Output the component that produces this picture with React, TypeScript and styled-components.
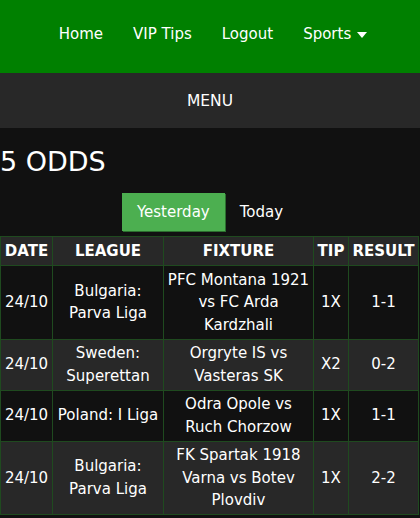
import * as React from "react";
import styled, { createGlobalStyle } from "styled-components";

const GlobalStyle = createGlobalStyle`
  html, body {
    margin: 0;
    padding: 0;
    background-color: #111111;
    color: white;
    font-family: "DejaVu Sans", Verdana, sans-serif;
    font-size: 15px;
  }
`;

const tips = [
  { date: "24/10", league: "Bulgaria: Parva Liga", fixture: "PFC Montana 1921 vs FC Arda Kardzhali", tip: "1X", result: "1-1" },
  { date: "24/10", league: "Sweden: Superettan", fixture: "Orgryte IS vs Vasteras SK", tip: "X2", result: "0-2" },
  { date: "24/10", league: "Poland: I Liga", fixture: "Odra Opole vs Ruch Chorzow", tip: "1X", result: "1-1" },
  { date: "24/10", league: "Bulgaria: Parva Liga", fixture: "FK Spartak 1918 Varna vs Botev Plovdiv", tip: "1X", result: "2-2" },
];

function App() {
  const [day, setDay] = React.useState("yesterday");

  return (
    <>
      <GlobalStyle />
      <Nav>
        <NavLink href="#">Home</NavLink>
        <NavLink href="#">VIP Tips</NavLink>
        <NavLink href="#">Logout</NavLink>
        <NavLink href="#">
          Sports
          <Caret />
        </NavLink>
      </Nav>
      <MenuBar>MENU</MenuBar>
      <Title>5 ODDS</Title>
      <Tabs>
        <Tab active={day === "yesterday"} onClick={() => setDay("yesterday")}>
          Yesterday
        </Tab>
        <Tab active={day === "today"} onClick={() => setDay("today")}>
          Today
        </Tab>
      </Tabs>
      <Table>
        <colgroup>
          <col style={{ width: 52 }} />
          <col style={{ width: 111 }} />
          <col style={{ width: 150 }} />
          <col style={{ width: 35 }} />
          <col />
        </colgroup>
        <thead>
          <tr>
            <Th>DATE</Th>
            <Th>LEAGUE</Th>
            <Th>FIXTURE</Th>
            <Th>TIP</Th>
            <Th>RESULT</Th>
          </tr>
        </thead>
        <tbody>
          {tips.map((t, i) => (
            <Row key={i} striped={i % 2 === 1}>
              <Td>{t.date}</Td>
              <Td>{t.league}</Td>
              <Td>{t.fixture}</Td>
              <Td>{t.tip}</Td>
              <Td>{t.result}</Td>
            </Row>
          ))}
        </tbody>
      </Table>
    </>
  );
}

const Nav = styled.nav`
  background-color: #008000;
  height: 73px;
  display: flex;
  justify-content: center;
  align-items: flex-start;
  padding-top: 24px;
  box-sizing: border-box;
  padding-left: 6px;
`;

const NavLink = styled.a`
  color: white;
  text-decoration: none;
  padding: 0 15px;
  line-height: 21px;
  display: flex;
  align-items: center;
`;

const Caret = styled.span`
  display: inline-block;
  margin-left: 6px;
  margin-top: 1px;
  width: 0;
  height: 0;
  border-left: 5px solid transparent;
  border-right: 5px solid transparent;
  border-top: 6px solid white;
`;

const MenuBar = styled.div`
  background-color: #282828;
  height: 55px;
  display: flex;
  align-items: center;
  justify-content: center;
  font-size: 15.5px;
`;

const Title = styled.h1`
  margin: 18px 0 0;
  font-size: 27px;
  font-weight: normal;
  line-height: 32px;
`;

const Tabs = styled.div`
  display: flex;
  justify-content: center;
  margin-top: 15px;
`;

const Tab = styled.button<{ active: boolean }>`
  font-family: inherit;
  font-size: 15px;
  color: white;
  border: none;
  height: 38px;
  padding: 0 15px;
  cursor: pointer;
  background-color: ${(p) => (p.active ? "#4caf50" : "transparent")};
  box-shadow: ${(p) => (p.active ? "1px 1px 0 #2c6e2f" : "none")};
`;

const Table = styled.table`
  margin-top: 5px;
  width: 419px;
  border-collapse: collapse;
  table-layout: fixed;
  border: 1px solid #1f4a1f;
`;

const Th = styled.th`
  background-color: #282828;
  border: 1px solid #1f4a1f;
  font-weight: bold;
  padding: 3px 0;
  line-height: 22px;
  font-size: 15px;
  text-align: center;
`;

const Row = styled.tr<{ striped: boolean }>`
  background-color: ${(p) => (p.striped ? "#282828" : "#111111")};
`;

const Td = styled.td`
  border: 1px solid #1f4a1f;
  text-align: center;
  padding: 2.5px 3px;
  line-height: 22.5px;
`;

export default App;
